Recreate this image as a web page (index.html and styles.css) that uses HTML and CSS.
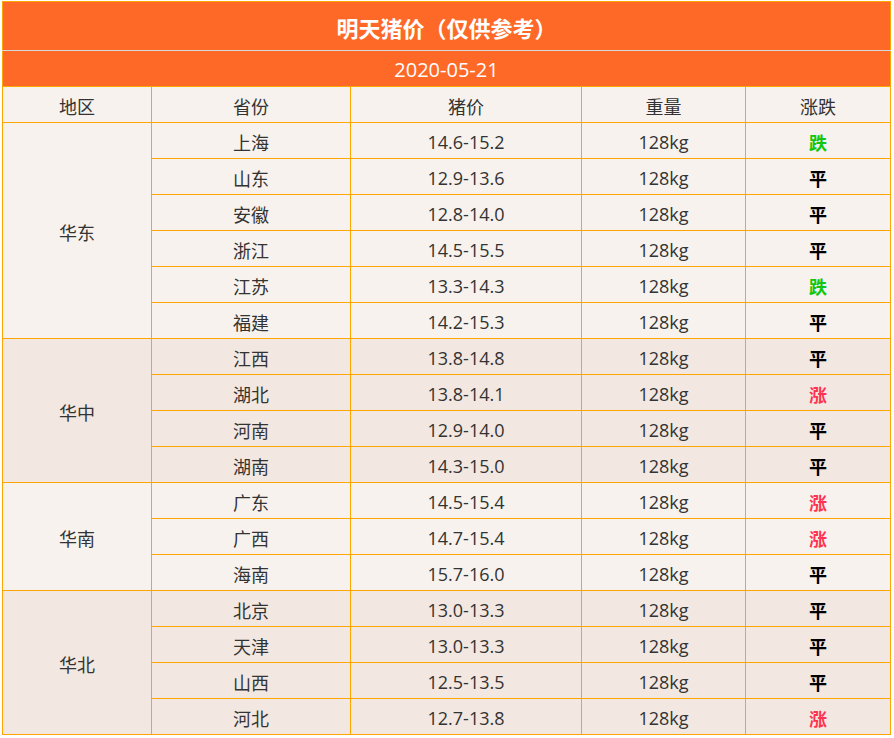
FILE: index.html
```html
<!DOCTYPE html>
<html lang="zh">
<head>
<meta charset="utf-8">
<title>明天猪价</title>
<link rel="stylesheet" href="styles.css">
</head>
<body>
<table class="price">
  <colgroup>
    <col class="c-area"><col class="c-prov"><col class="c-price"><col class="c-weight"><col class="c-trend">
  </colgroup>
  <thead>
    <tr><th colspan="5" class="title">明天猪价（仅供参考）</th></tr>
    <tr><th colspan="5" class="date">2020-05-21</th></tr>
    <tr class="head"><td>地区</td><td>省份</td><td>猪价</td><td>重量</td><td>涨跌</td></tr>
  </thead>
  <tbody class="zone-a">
    <tr><td rowspan="6">华东</td><td>上海</td><td>14.6-15.2</td><td>128kg</td><td class="down">跌</td></tr>
    <tr><td>山东</td><td>12.9-13.6</td><td>128kg</td><td class="flat">平</td></tr>
    <tr><td>安徽</td><td>12.8-14.0</td><td>128kg</td><td class="flat">平</td></tr>
    <tr><td>浙江</td><td>14.5-15.5</td><td>128kg</td><td class="flat">平</td></tr>
    <tr><td>江苏</td><td>13.3-14.3</td><td>128kg</td><td class="down">跌</td></tr>
    <tr><td>福建</td><td>14.2-15.3</td><td>128kg</td><td class="flat">平</td></tr>
  </tbody>
  <tbody class="zone-b">
    <tr><td rowspan="4">华中</td><td>江西</td><td>13.8-14.8</td><td>128kg</td><td class="flat">平</td></tr>
    <tr><td>湖北</td><td>13.8-14.1</td><td>128kg</td><td class="up">涨</td></tr>
    <tr><td>河南</td><td>12.9-14.0</td><td>128kg</td><td class="flat">平</td></tr>
    <tr><td>湖南</td><td>14.3-15.0</td><td>128kg</td><td class="flat">平</td></tr>
  </tbody>
  <tbody class="zone-a">
    <tr><td rowspan="3">华南</td><td>广东</td><td>14.5-15.4</td><td>128kg</td><td class="up">涨</td></tr>
    <tr><td>广西</td><td>14.7-15.4</td><td>128kg</td><td class="up">涨</td></tr>
    <tr><td>海南</td><td>15.7-16.0</td><td>128kg</td><td class="flat">平</td></tr>
  </tbody>
  <tbody class="zone-b">
    <tr><td rowspan="4">华北</td><td>北京</td><td>13.0-13.3</td><td>128kg</td><td class="flat">平</td></tr>
    <tr><td>天津</td><td>13.0-13.3</td><td>128kg</td><td class="flat">平</td></tr>
    <tr><td>山西</td><td>12.5-13.5</td><td>128kg</td><td class="flat">平</td></tr>
    <tr><td>河北</td><td>12.7-13.8</td><td>128kg</td><td class="up">涨</td></tr>
  </tbody>
</table>
</body>
</html>
```
FILE: styles.css
```css
html, body {
  margin: 0;
  padding: 0;
  background: #ffffff;
  overflow: hidden;
}
body {
  padding: 1px 0 0 2px;
  font-family: "Open Sans", "Noto Sans CJK SC", sans-serif;
  color: #333333;
}
.price {
  border-collapse: collapse;
  table-layout: fixed;
  width: 888px;
  font-size: 18px;
}
.c-area { width: 149px; }
.c-prov { width: 199px; }
.c-price { width: 231px; }
.c-weight { width: 164px; }
.c-trend { width: 145px; }
.price td, .price th {
  border: 1px solid #ffa500;
  text-align: center;
  padding: 2px 0 0 0;
  height: 33px;
  font-family: "Open Sans", "Noto Sans CJK SC", sans-serif;
}
.price .title {
  background: #ff6928;
  color: #ffffff;
  font-size: 22px;
  font-weight: bold;
  height: 46px;
  font-family: "Noto Sans CJK SC", sans-serif;
  border-bottom: 1px solid #d8d8d8;
}
.price .date {
  background: #ff6928;
  color: #ffffff;
  font-size: 20px;
  font-weight: normal;
  border-top: 1px solid #d8d8d8;
}
.head td {
  background: #f7f2ee;
  font-family: "Noto Sans CJK SC", sans-serif;
}
.zone-a td { background: #f7f2ee; }
.zone-b td { background: #f2e7e1; }
.price td.flat { color: #000000; font-weight: bold; font-family: "Noto Sans CJK SC", sans-serif; }
.price td.up { color: #ff3350; font-weight: bold; font-family: "Noto Sans CJK SC", sans-serif; }
.price td.down { color: #11c711; font-weight: bold; font-family: "Noto Sans CJK SC", sans-serif; }
```
